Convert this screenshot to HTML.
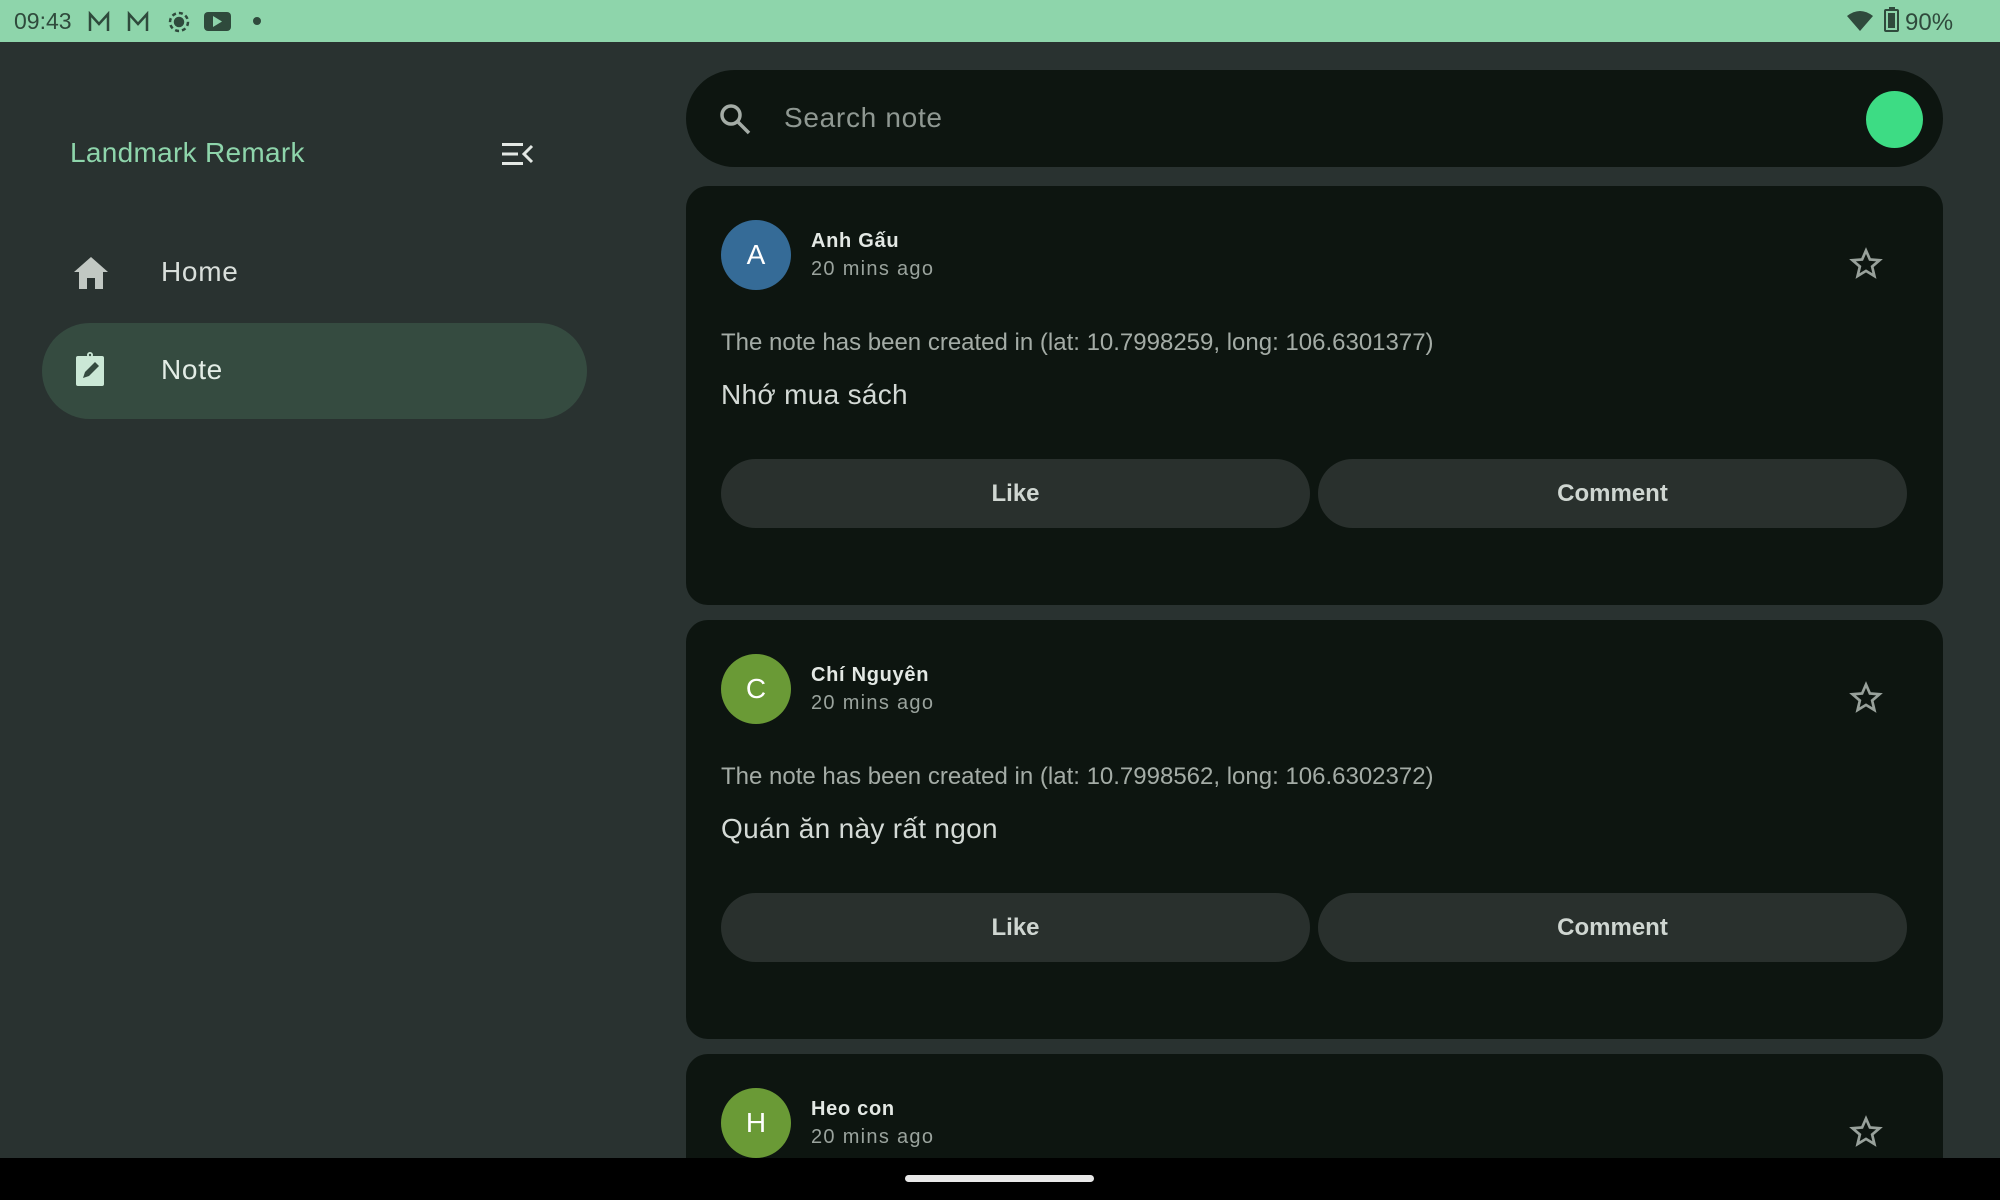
<!DOCTYPE html>
<html><head><meta charset="utf-8"><style>
*{margin:0;padding:0;box-sizing:border-box}
html{width:2000px;height:1200px;overflow:hidden}
body{width:2000px;height:1200px;overflow:hidden;background:#293230;font-family:"Liberation Sans","DejaVu Sans",sans-serif;position:relative}
.abs{position:absolute}
.status{left:0;top:0;width:2000px;height:42px;background:#8ed5ab;color:#2f4a3c}
.card{position:absolute;left:686px;width:1257px;height:419px;background:#0d1510;border-radius:22px;overflow:hidden}
.av{position:absolute;left:35px;top:34px;width:70px;height:70px;border-radius:50%;color:#fff;font-size:28px;text-align:center;line-height:70px}
.name{position:absolute;left:125px;top:44px;color:#e3e8e4;font-size:20px;font-weight:bold;letter-spacing:.7px}
.time{position:absolute;left:125px;top:72px;color:#9aa39d;font-size:20px;letter-spacing:1.3px}
.coord{position:absolute;left:35px;top:143px;color:#a4aca6;font-size:24px}
.body{position:absolute;left:35px;top:193px;color:#d4dad6;font-size:28px;letter-spacing:.3px}
.btn{position:absolute;top:273px;height:69px;width:589px;border-radius:35px;background:#29302d;color:#cfd6d1;font-size:24px;font-weight:bold;text-align:center;line-height:69px}
.star{position:absolute;left:1162px;top:60px}
</style></head><body>
<div class="abs status">
<div class="abs" style="left:14px;top:8px;font-size:23px;color:#2f4a3c">09:43</div>
<svg class="abs" style="left:88px;top:11px" width="120" height="22" viewBox="0 0 120 22" fill="none" stroke="#2f4a3c" stroke-width="2.5"><path d="M2 20V3l9 10 9-10v17"/><path d="M41 20V3l9 10 9-10v17"/><circle cx="91" cy="11" r="4" fill="#2f4a3c"/><circle cx="91" cy="11" r="9" stroke-dasharray="4 3"/></svg>
<div class="abs" style="left:204px;top:12px;width:27px;height:19px;background:#2f4a3c;border-radius:4px"></div>
<svg class="abs" style="left:213px;top:16px" width="10" height="11"><path d="M0 0L9 5.5 0 11z" fill="#8ed5ab"/></svg>
<div class="abs" style="left:253px;top:17px;width:8px;height:8px;border-radius:50%;background:#2f4a3c"></div>
<svg class="abs" style="left:1847px;top:10px" width="26" height="22"><path d="M0 6Q13 -4 26 6L13 21z" fill="#2f4a3c"/></svg>
<div class="abs" style="left:1884px;top:9px;width:15px;height:23px;border:2.5px solid #2f4a3c;border-radius:2px"><div style="margin:2px;height:15px;background:#2f4a3c"></div></div>
<div class="abs" style="left:1885px;top:7px;width:6px;height:3px;background:#2f4a3c;margin-left:4px"></div>
<div class="abs" style="left:1905px;top:9px;font-size:24px">90%</div>
</div>

<div class="abs" style="left:70px;top:137px;font-size:28px;color:#8ed5ab;letter-spacing:.3px">Landmark Remark</div>
<svg class="abs" style="left:500px;top:141px" width="34" height="26" viewBox="0 0 34 26" fill="#e3e8e4"><rect x="2" y="2" width="21" height="3"/><rect x="2" y="11.5" width="16" height="3"/><rect x="2" y="21" width="21" height="3"/><path d="M32 5l-8 8 8 8" fill="none" stroke="#e3e8e4" stroke-width="3"/></svg>

<svg class="abs" style="left:73px;top:256px" width="36" height="34" viewBox="0 0 36 34"><path d="M18 1L1 16h5v17h8V22h8v11h8V16h5z" fill="#c1c8c3"/></svg>
<div class="abs" style="left:161px;top:256px;font-size:28px;color:#d9dfdb;letter-spacing:.7px">Home</div>

<div class="abs" style="left:42px;top:323px;width:545px;height:96px;border-radius:48px;background:#354b40"></div>
<svg class="abs" style="left:74px;top:351px" width="34" height="36" viewBox="0 0 34 36"><rect x="2" y="5" width="28" height="30" rx="2" fill="#cbe8d6"/><circle cx="16" cy="4" r="3" fill="#cbe8d6"/><circle cx="16" cy="4" r="1.2" fill="#354b40"/><path d="M9 27l2-6 10-10 4 4-10 10z" fill="#354b40"/></svg>
<div class="abs" style="left:161px;top:354px;font-size:28px;color:#e3ede6;letter-spacing:.7px">Note</div>

<div class="abs" style="left:686px;top:70px;width:1257px;height:97px;border-radius:49px;background:#0d1510"></div>
<svg class="abs" style="left:718px;top:102px" width="34" height="34" viewBox="0 0 34 34" fill="none" stroke="#a4aca6" stroke-width="3.5"><circle cx="13" cy="13" r="9"/><path d="M20 20l11 11"/></svg>
<div class="abs" style="left:784px;top:102px;font-size:28px;color:#8f9892;letter-spacing:.7px">Search note</div>
<div class="abs" style="left:1866px;top:91px;width:57px;height:57px;border-radius:50%;background:#3ddc84"></div>

<div class="card" style="top:186px">
<div class="av" style="background:#356b97">A</div>
<div class="name">Anh Gấu</div><div class="time">20 mins ago</div>
<svg class="star" width="36" height="36" viewBox="0 0 24 24"><path d="M12 3l2.6 6 6.4.5-4.9 4.2 1.5 6.3L12 16.6 6.4 20l1.5-6.3L3 9.5l6.4-.5z" fill="none" stroke="#98a19b" stroke-width="1.8"/></svg>
<div class="coord">The note has been created in (lat: 10.7998259, long: 106.6301377)</div>
<div class="body">Nhớ mua sách</div>
<div class="btn" style="left:35px">Like</div><div class="btn" style="left:632px">Comment</div>
</div>

<div class="card" style="top:620px">
<div class="av" style="background:#6a9a36">C</div>
<div class="name">Chí Nguyên</div><div class="time">20 mins ago</div>
<svg class="star" width="36" height="36" viewBox="0 0 24 24"><path d="M12 3l2.6 6 6.4.5-4.9 4.2 1.5 6.3L12 16.6 6.4 20l1.5-6.3L3 9.5l6.4-.5z" fill="none" stroke="#98a19b" stroke-width="1.8"/></svg>
<div class="coord">The note has been created in (lat: 10.7998562, long: 106.6302372)</div>
<div class="body">Quán ăn này rất ngon</div>
<div class="btn" style="left:35px">Like</div><div class="btn" style="left:632px">Comment</div>
</div>

<div class="card" style="top:1054px;height:104px;border-radius:22px 22px 0 0">
<div class="av" style="background:#6a9a36">H</div>
<div class="name">Heo con</div><div class="time">20 mins ago</div>
<svg class="star" width="36" height="36" viewBox="0 0 24 24"><path d="M12 3l2.6 6 6.4.5-4.9 4.2 1.5 6.3L12 16.6 6.4 20l1.5-6.3L3 9.5l6.4-.5z" fill="none" stroke="#98a19b" stroke-width="1.8"/></svg>
</div>

<div class="abs" style="left:0;top:1158px;width:2000px;height:42px;background:#000"></div>
<div class="abs" style="left:905px;top:1175px;width:189px;height:7px;border-radius:4px;background:#e8e8e8"></div>
</body></html>
